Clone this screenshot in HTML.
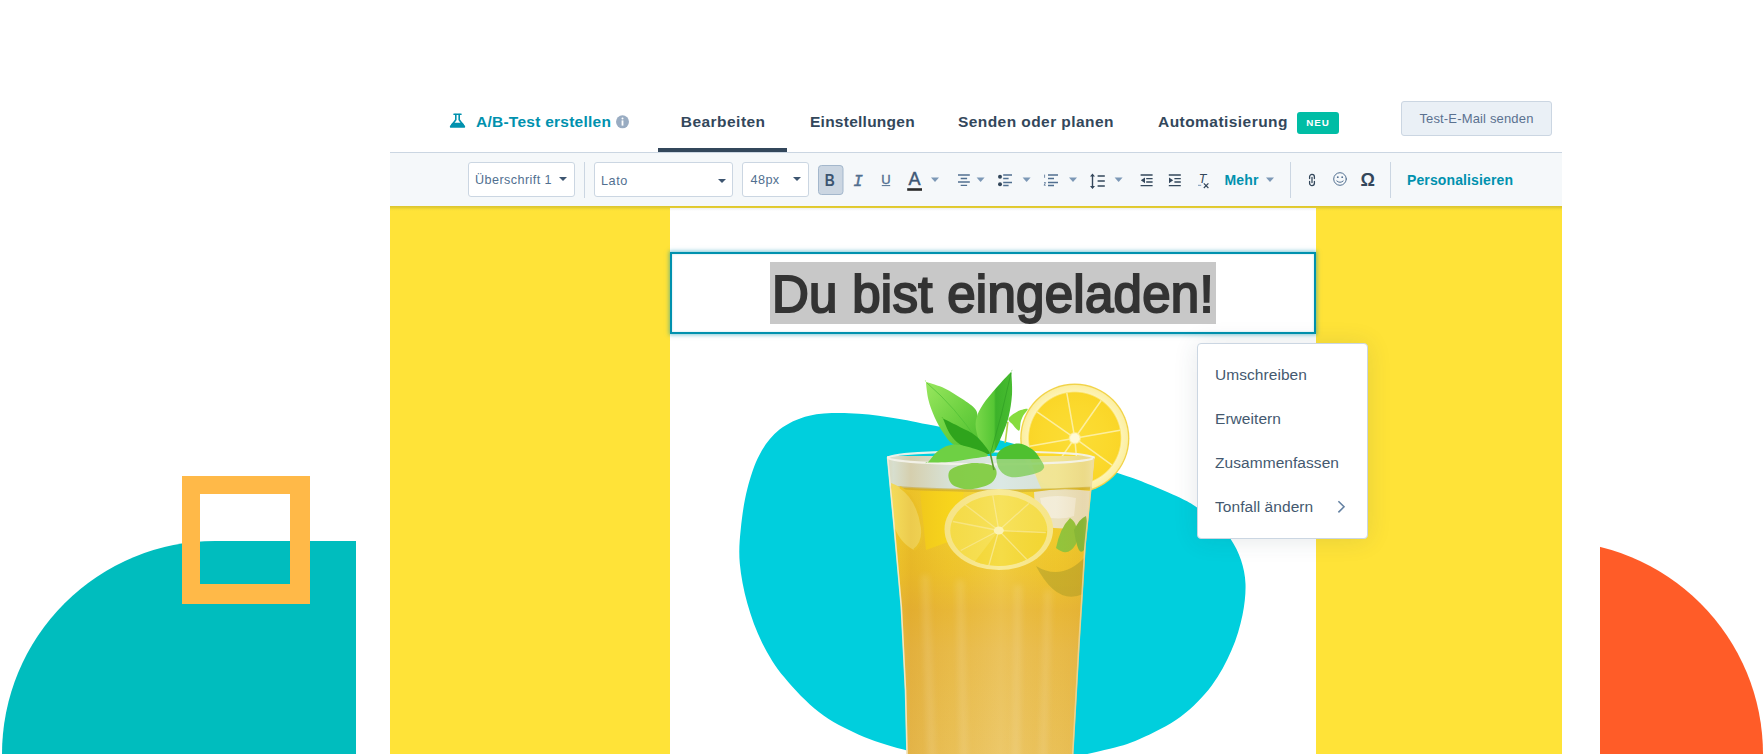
<!DOCTYPE html>
<html lang="de">
<head>
<meta charset="utf-8">
<title>E-Mail bearbeiten</title>
<style>
*{box-sizing:border-box;margin:0;padding:0}
html,body{width:1764px;height:754px;overflow:hidden;background:#fff}
body{position:relative;font-family:"Liberation Sans",sans-serif;color:#33475b}
.abs{position:absolute}
.t{position:absolute;white-space:nowrap;line-height:1}
/* decorative shapes */
#teal{left:2px;top:541px;width:354px;height:213px;background:#00bdbe;border-top-left-radius:213px 213px}
#sq{left:182px;top:476px;width:128px;height:128px;border:18px solid #ffb948;border-right-width:20px;border-bottom-width:20px}
#orange{left:1337px;top:541px;width:426px;height:426px;border-radius:50%;background:#ff5c28}
#card{left:356px;top:33px;width:1244px;height:780px;background:#fff;border-radius:36px}
/* app */
#tabs{left:390px;top:85px;width:1172px;height:67px;background:#fff}
#tbar{left:390px;top:152px;width:1172px;height:54px;background:#f5f8fa;border-top:1px solid #cbd6e2}
#yellow{left:390px;top:206px;width:1172px;height:548px;background:linear-gradient(#dcc52d,#e6cf34 2px,#f6dc37 3px,#ffe338 5px)}
#mail{left:670px;top:208px;width:646px;height:546px;background:linear-gradient(#eef0f2,#fff 3px)}
.tab{font-weight:bold;font-size:15.5px;color:#33475b;letter-spacing:.25px}
.teal{color:#0091ae}
#uline{left:658.2px;top:148px;width:129px;height:4px;background:#33475b}
#neu{left:1297px;top:112px;width:42px;height:22px;border-radius:3px;background:#00bda5}
#btn{left:1400.7px;top:101.3px;width:151px;height:35px;border-radius:3px;background:#eaf0f6;border:1px solid #cbd6e2}
.sel{position:absolute;top:162px;height:35px;background:#fff;border:1px solid #cbd6e2;border-radius:3px}
.sep{position:absolute;top:162px;width:1px;height:36px;background:#cbd6e2}
.caret{position:absolute;width:0;height:0;border-left:4.1px solid transparent;border-right:4.1px solid transparent;border-top:4.7px solid #3d5570}
.caret.l{border-top-color:#7c98b6}
#hbox{left:670px;top:252px;width:646px;height:82px;border:2px solid #0091ae;background:#fff;box-shadow:0 0 4px 1px rgba(0,145,174,.5),inset 0 0 2px rgba(0,145,174,.3)}
#hl{left:770px;top:262px;width:446px;height:62px;background:#c8c8c8}
#h1{left:772px;top:269px;font-size:51px;font-weight:normal;color:#333;-webkit-text-stroke:2px #333;letter-spacing:.28px;transform-origin:0 0;transform:scaleX(1)}
#menu{left:1197px;top:343px;width:171px;height:196px;background:#fff;border:1px solid #cbd6e2;border-radius:4px;box-shadow:0 1px 24px rgba(45,62,80,.12)}
.mi{font-size:15.5px;color:#44596f;left:1215px;letter-spacing:.06px}
</style>
</head>
<body>
<div class="abs" id="teal"></div>
<div class="abs" id="orange"></div>
<div class="abs" id="card"></div>
<div class="abs" id="sq"></div>

<div class="abs" id="tabs"></div>
<div class="abs" id="tbar"></div>
<div class="abs" id="yellow"></div>
<div class="abs" id="mail"></div>

<!-- tabs -->
<span class="t tab teal" id="t1" style="left:476px;top:114px">A/B-Test erstellen</span>
<span class="t tab" id="t2" style="letter-spacing:.46px;left:680.8px;top:113.7px">Bearbeiten</span>
<span class="t tab" id="t3" style="left:810px;top:114px">Einstellungen</span>
<span class="t tab" id="t4" style="letter-spacing:.43px;left:958px;top:114px">Senden oder planen</span>
<span class="t tab" id="t5" style="letter-spacing:.45px;left:1158px;top:114px">Automatisierung</span>
<div class="abs" id="uline"></div>
<div class="abs" id="neu"></div>
<span class="t" id="t6" style="left:1306.2px;top:118.2px;font-size:9.8px;font-weight:bold;color:#fff;letter-spacing:.95px">NEU</span>
<div class="abs" id="btn"></div>
<span class="t" id="t7" style="left:1419.4px;top:111.7px;font-size:13px;letter-spacing:.16px;color:#5a7190">Test-E-Mail senden</span>

<!-- toolbar -->
<div class="sel" style="left:468px;width:107px"></div>
<span class="t" id="t8" style="left:475px;top:174.3px;font-size:12.6px;letter-spacing:.43px;color:#516f90">Überschrift 1</span>
<div class="caret" style="left:559.4px;top:177.3px"></div>
<div class="sep" style="left:584.3px"></div>
<div class="sel" style="left:594px;width:139.2px"></div>
<span class="t" id="t9" style="left:601px;top:175.2px;font-size:12.7px;letter-spacing:.55px;color:#516f90">Lato</span>
<div class="caret" style="left:717.7px;top:178.5px"></div>
<div class="sel" style="left:742.4px;width:66.4px"></div>
<span class="t" id="t10" style="left:750.6px;top:174.1px;font-size:12.7px;letter-spacing:.37px;color:#516f90">48px</span>
<div class="caret" style="left:792.8px;top:177.2px"></div>

<span class="t teal" id="t11" style="left:1224.5px;top:173px;font-size:14px;font-weight:bold;letter-spacing:.2px">Mehr</span>
<div class="sep" style="left:1290px"></div>
<div class="sep" style="left:1390px"></div>
<span class="t teal" id="t12" style="left:1407px;top:173px;font-size:14px;font-weight:bold;letter-spacing:.12px">Personalisieren</span>


<!-- icons overlay -->
<svg class="abs" id="icons" style="left:0;top:0;z-index:5" width="1764" height="754" viewBox="0 0 1764 754" font-family="Liberation Sans, sans-serif">
<!-- flask -->
<g stroke="#0091ae" fill="none" stroke-width="1.6" stroke-linejoin="round" stroke-linecap="round">
<path d="M454 114.3h7"/>
<path d="M455.8 114.6v5.2l-5.1 7h13.6l-5.1-7v-5.2"/>
<path d="M452.6 123.6h9.8l2 3.2h-13.8z" fill="#0091ae"/>
</g>
<!-- info -->
<circle cx="622.5" cy="121.8" r="6.5" fill="#99acc2"/>
<circle cx="622.5" cy="118.4" r="1" fill="#fff"/>
<rect x="621.6" y="120.4" width="1.8" height="5.2" fill="#fff"/>
<!-- bold button -->
<rect x="818.5" y="165.5" width="24.5" height="29" rx="3" fill="#cbd6e2" stroke="#a3b7cc"/>
<text x="0" y="186" font-size="16.5" font-weight="bold" fill="#3b5470" text-anchor="middle" transform="translate(829.8 0) scale(.84 1)">B</text>
<text x="858" y="186" font-size="16" font-style="italic" font-family="Liberation Mono, monospace" fill="#516f90" stroke="#516f90" stroke-width=".5" text-anchor="middle">I</text>
<text x="886" y="183.8" font-size="13" fill="#516f90" stroke="#516f90" stroke-width=".35" text-anchor="middle">U</text>
<rect x="881.8" y="185.1" width="8.4" height="1" fill="#516f90"/>
<text x="914.4" y="184.5" font-size="18" fill="#3f5876" stroke="#3f5876" stroke-width=".45" text-anchor="middle">A</text>
<rect x="907.2" y="188.2" width="14.8" height="2.6" fill="#2b2b2b"/>
<g fill="#7c98b6">
<path d="M931 177.5h8l-4 4.6z"/>
<path d="M976.6 177.5h8l-4 4.6z"/>
<path d="M1022.6 177.5h8l-4 4.6z"/>
<path d="M1069 177.5h8l-4 4.6z"/>
<path d="M1114.6 177.5h8l-4 4.6z"/>
</g>
<!-- align center -->
<g stroke="#516f90" stroke-width="1.3" fill="none">
<path d="M958 175h11.8M960.7 178.5h6.4M958 182h11.8M960.7 185.4h6.4"/>
<!-- bullets -->
<path d="M1003.2 175h8.8M1003.2 178.5h5.4M1003.2 182.5h8.8M1003.2 185.5h5.4"/>
<!-- numbered -->
<path d="M1048 175h10M1048 178.5h6M1048 182.5h10M1048 185.5h6"/>
<path d="M1044.6 174.6v3.2M1044 182.6h1.6l-1.6 2.6h1.8" stroke-width=".8"/>
</g>
<circle cx="1000" cy="176.7" r="2" fill="#33475b"/>
<circle cx="1000" cy="184.2" r="2" fill="#33475b"/>
<!-- line height -->
<g stroke="#33475b" stroke-width="1.6" fill="none">
<path d="M1097.6 176h7.2M1097.6 181h7.2M1097.6 186h7.2"/>
<path d="M1092.5 175v12.4" stroke-width="1.4"/>
</g>
<path d="M1090 176.4l2.5-3 2.5 3zM1090 186l2.5 3 2.5-3z" fill="#33475b"/>
<!-- outdent / indent -->
<g stroke="#33475b" stroke-width="1.4" fill="none">
<path d="M1140.6 175h12M1140.6 185.6h12M1146.2 178.6h6.4M1146.2 182h6.4"/>
<path d="M1168.8 175h12M1168.8 185.6h12M1174.4 178.6h6.4M1174.4 182h6.4"/>
</g>
<path d="M1145 177.4v5.8l-4.2-2.9zM1169 177.4v5.8l4.2-2.9z" fill="#33475b"/>
<!-- clear format -->
<text x="1202.6" y="183.4" font-size="12.5" font-style="italic" fill="#33475b" text-anchor="middle">T</text>
<path d="M1203.8 183.4l4.6 4.6M1208.4 183.4l-4.6 4.6" stroke="#33475b" stroke-width="1.2" fill="none"/>
<rect x="1198" y="184.8" width="3.2" height="1" fill="#7c98b6"/>
<!-- Mehr caret -->
<path d="M1266 177.5h8l-4 4.6z" fill="#7c98b6"/>
<!-- link -->
<g stroke="#33475b" stroke-width="1.3" fill="none" stroke-linecap="round">
<path d="M1309.6 178.6v-1.8a2.4 2.4 0 0 1 4.8 0v1.8M1309.6 181.4v1.8a2.4 2.4 0 0 0 4.8 0v-1.8M1312 177.4v5.2"/>
</g>
<!-- smiley -->
<g stroke="#516f90" stroke-width="1" fill="none" stroke-linecap="round">
<circle cx="1340" cy="179" r="6.3"/>
<path d="M1336.8 181q3.2 2.8 6.4 0"/>
</g>
<circle cx="1337.8" cy="177.2" r=".9" fill="#516f90"/>
<circle cx="1342.2" cy="177.2" r=".9" fill="#516f90"/>
<text x="1367.8" y="186.4" font-size="18" font-weight="bold" fill="#33475b" text-anchor="middle">Ω</text>
<!-- chevron in menu -->
<path d="M1338.4 501.2l5.6 5.6-5.6 5.6" stroke="#6582a3" stroke-width="1.6" fill="none"/>
</svg>

<!-- heading -->
<div class="abs" id="hbox"></div>
<div class="abs" id="hl"></div>
<span class="t" id="h1">Du bist eingeladen!</span>


<!-- picture -->
<svg class="abs" id="pic" style="left:0;top:0" width="1764" height="754" viewBox="0 0 1764 754">
<defs>
<linearGradient id="liq" x1="0" y1="0" x2="0" y2="1">
<stop offset="0" stop-color="#f5d42e"/><stop offset=".3" stop-color="#efc62c"/><stop offset=".45" stop-color="#e9b938"/><stop offset=".6" stop-color="#e9bc4a"/><stop offset="1" stop-color="#eac25a"/>
</linearGradient>
<linearGradient id="shade" x1="0" y1="0" x2="1" y2="0">
<stop offset="0" stop-color="#fff" stop-opacity=".5"/><stop offset=".06" stop-color="#d89a20" stop-opacity=".1"/><stop offset=".14" stop-color="#d08c18" stop-opacity=".26"/><stop offset=".32" stop-color="#d89a20" stop-opacity=".06"/><stop offset=".55" stop-color="#fff" stop-opacity=".1"/><stop offset=".8" stop-color="#d89a20" stop-opacity=".04"/><stop offset=".92" stop-color="#c98a20" stop-opacity=".14"/><stop offset="1" stop-color="#fff" stop-opacity=".35"/>
</linearGradient>
<radialGradient id="lem" cx=".5" cy=".5" r=".5">
<stop offset="0" stop-color="#fff7c8"/><stop offset=".09" stop-color="#fff4b8"/><stop offset=".12" stop-color="#fbdc34"/><stop offset=".6" stop-color="#fbd92c"/><stop offset=".83" stop-color="#fad628"/><stop offset=".86" stop-color="#fdf3b4"/><stop offset=".965" stop-color="#fcefa2"/><stop offset=".985" stop-color="#f1d246"/><stop offset="1" stop-color="#f3d650"/>
</radialGradient>
<filter id="bl" x="-20%" y="-5%" width="140%" height="110%"><feGaussianBlur stdDeviation="3"/></filter>
<clipPath id="gclip"><path d="M887 456L893.3 523L900.8 606.7L905 690L906.7 760H1073L1079.8 640L1082.4 599L1085.6 546L1091 493L1094.4 456Z"/></clipPath>
</defs>
<path fill="#00cfdd" d="M739.8 563.5C738.7 551.1 739.5 541.2 740.8 528.8C742.0 516.4 744.1 501.5 747.3 489.1C750.4 476.7 754.3 464.3 759.7 454.4C765.1 444.5 771.2 436.1 779.5 429.6C787.8 423.2 797.7 418.4 809.3 415.7C820.9 413.0 835.8 412.9 849.0 413.2C862.2 413.4 875.4 415.3 888.6 417.2C901.8 419.1 911.4 421.1 928.3 424.6C945.2 428.1 968.0 432.8 990.0 438.0C1012.0 443.2 1038.7 450.1 1060.0 456.0C1081.3 461.9 1102.8 468.4 1117.6 473.1C1132.4 477.8 1138.3 480.1 1148.6 484.2C1158.9 488.3 1171.5 493.6 1179.6 497.5C1187.7 501.4 1191.1 503.4 1197.0 507.5C1202.9 511.6 1209.4 516.8 1215.0 522.0C1220.6 527.2 1226.3 532.7 1230.6 539.0C1234.9 545.3 1238.5 552.5 1241.0 560.0C1243.5 567.5 1245.2 574.9 1245.5 584.0C1245.8 593.1 1244.8 603.9 1242.5 614.9C1240.2 625.9 1236.7 638.5 1231.5 650.3C1226.3 662.1 1220.1 674.6 1211.6 685.7C1203.1 696.8 1192.6 707.8 1180.6 716.7C1168.6 725.6 1152.4 733.4 1139.7 738.9C1127.0 744.4 1120.9 746.1 1104.3 750.0C1087.7 753.9 1064.0 760.0 1040.0 762.0C1016.0 764.0 982.8 764.1 960.0 762.0C937.2 759.9 920.4 754.0 903.5 749.5C886.6 745.0 872.9 740.9 858.9 734.7C844.9 728.5 831.6 721.8 819.2 712.3C806.8 702.8 794.0 689.2 784.5 677.6C775.0 666.0 768.4 655.3 762.2 642.9C756.0 630.5 751.0 616.4 747.3 603.2C743.6 590.0 740.9 575.9 739.8 563.5Z"/>
<!-- lemon slice on rim -->
<circle cx="1074.8" cy="438.2" r="54.6" fill="url(#lem)"/>
<g stroke="#fdf0a4" stroke-width="1.5" opacity=".95">
<path d="M1074.8 438.2L1066.8 392.9M1074.8 438.2L1101.2 400.5M1074.8 438.2L1120.1 430.2M1074.8 438.2L1112.0 465.2M1074.8 438.2L1078.8 484.0M1074.8 438.2L1048.4 475.9M1074.8 438.2L1029.5 446.2M1074.8 438.2L1037.1 411.8"/>
</g>
<circle cx="1074.8" cy="438.2" r="4.6" fill="#fffad8"/>
<!-- back leaf -->
<path d="M1007.8 422L1005.2 443" stroke="#b4d246" stroke-width="1.6" fill="none"/>
<path d="M1008.6 418.6C1009.5 416.6 1014.0 413.3 1017.2 411.7C1020.4 410.1 1026.6 408.3 1027.6 409.0C1028.6 409.7 1024.2 413.8 1023.0 416.0C1021.9 418.2 1021.4 419.6 1020.7 422.0C1020.0 424.4 1020.5 430.4 1019.0 430.7C1017.5 431.0 1013.7 425.8 1012.0 423.8C1010.3 421.8 1007.7 420.6 1008.6 418.6Z" fill="#86dc3e"/>
<!-- glass -->
<g clip-path="url(#gclip)">
<rect x="880" y="450" width="220" height="40" fill="#e7e7e2" opacity=".93"/>
<path d="M1030 456h70v34h-58q-8-16-12-34z" fill="#f3e88e" opacity=".85"/>
<path d="M880 487q110 6 220 0V760H880z" fill="url(#liq)"/>
<path d="M888 487q104 7 206 1" stroke="#c4a526" stroke-width="3" fill="none" opacity=".55"/>
<!-- ice -->
<path d="M1034 492q28-5 56-1l-2 32q-22 10-46 2q-8-14-8-33z" fill="#ebe6cf" opacity=".95"/>
<path d="M1040 498q18-4 36 0l-2 18q-16 5-30 0z" fill="#f6f3e6" opacity=".8"/>
<!-- wedge behind -->
<path d="M920 491l44 1q-6 30-16 50l-22 8z" fill="#f9d81c"/>
<!-- left slice -->
<path d="M891 483q24 8 31 44q2 16-8 23q-16-8-21-28z" fill="#f6e160"/>
<path d="M900 487q18 12 22 40q2 16-8 23" stroke="#f2cf2c" stroke-width="2.4" fill="none"/>
<!-- right mint -->
<path d="M1056 548q4-20 14-30q10 6 6 26q-8 14-20 4z" fill="#8fc63d"/>
<path d="M1074 530q6-12 12-14q4 14-2 34q-6 8-10-20z" fill="#7fbc3a"/>
<path d="M1036 566q26 16 50-10l-3 38q-26 12-47-28z" fill="#b9a52a" opacity=".7"/>
<!-- front slice -->
<ellipse cx="998.8" cy="529.5" rx="54.3" ry="40.5" fill="#f8e98e"/>
<ellipse cx="998.8" cy="530.5" rx="48.5" ry="35.5" fill="#f6df4a"/>
<path d="M998.8 530.5L1047 531A48.5 35.5 0 0 1 975 561.5z" fill="#f4d62c" opacity=".8"/>
<g stroke="#f9ea90" stroke-width="1.3" opacity=".8"><path d="M998.8 530.5l-6-35M998.8 530.5l30-27M998.8 530.5l47 2M998.8 530.5l28 29M998.8 530.5l-10 35M998.8 530.5l-38 20M998.8 530.5l-46-9M998.8 530.5l-34-26"/></g>
<ellipse cx="998.8" cy="530.5" rx="5" ry="4" fill="#fbf2b0"/>
<rect x="880" y="450" width="220" height="320" fill="url(#shade)"/>
<g stroke="#fff" opacity=".13" stroke-width="7" filter="url(#bl)"><path d="M925 575L932 760M960 580L964 760M1018 585L1016 760M1048 590L1043 760"/></g>
</g>
<!-- rim -->
<ellipse cx="990.8" cy="457.8" rx="103" ry="6.5" fill="none" stroke="#f3f2ea" stroke-width="2.2" opacity=".95"/>
<path d="M887.6 458L893.8 523L901.3 606.7L905.5 690L907.2 760" stroke="#f5efd8" stroke-width="1.6" opacity=".85" fill="none"/>
<path d="M1093.8 458L1090.4 493L1085 546L1081.8 599L1079.2 640L1072.4 760" stroke="#ecd9a0" stroke-width="1.6" opacity=".8" fill="none"/>
<!-- leaf in glass -->
<path d="M950.0 470.3C952.9 466.9 962.1 464.2 969.0 463.4C975.9 462.5 986.8 463.5 991.4 465.2C996.0 466.9 996.9 470.7 996.6 473.8C996.3 476.9 994.3 481.4 989.7 484.0C985.1 486.6 975.3 489.3 969.0 489.3C962.7 489.3 954.9 487.2 951.7 484.0C948.5 480.8 947.1 473.7 950.0 470.3Z" fill="#7ccb3a" opacity=".9"/>
<!-- leaves -->
<defs>
<linearGradient id="g1" x1="0" y1="0" x2="1" y2="1"><stop offset="0" stop-color="#9be860"/><stop offset=".55" stop-color="#6fd242"/><stop offset="1" stop-color="#4fc030"/></linearGradient>
<linearGradient id="g2" x1="0" y1="0" x2="1" y2="0"><stop offset="0" stop-color="#7ad84a"/><stop offset=".5" stop-color="#55c634"/><stop offset=".55" stop-color="#3cb22a"/><stop offset="1" stop-color="#48bc30"/></linearGradient>
<clipPath id="above"><rect x="900" y="360" width="200" height="99.5"/></clipPath>
<clipPath id="below"><rect x="900" y="459.5" width="200" height="40"/></clipPath>
</defs>
<path d="M925.9 381.6C925.6 378.7 923.4 380.9 926.5 382.0C929.6 383.1 938.9 385.6 944.8 388.4C950.7 391.2 956.8 395.2 962.0 398.8C967.2 402.4 973.3 405.8 975.9 410.0C978.5 414.2 977.1 418.8 977.5 424.0C977.9 429.2 979.9 437.3 978.0 441.0C976.1 444.7 970.1 445.4 966.0 446.0C961.9 446.6 957.2 446.8 953.4 444.5C949.6 442.2 946.1 437.0 943.0 432.4C939.9 427.8 936.9 422.3 934.5 416.9C932.1 411.4 929.8 405.6 928.4 399.7C927.0 393.8 926.2 384.6 925.9 381.6Z" fill="url(#g1)"/>
<path d="M927 383Q956 408 977 440" stroke="#4fbf34" stroke-width="1" fill="none" opacity=".7"/>
<path d="M1011.2 371.7C1013.7 369.2 1011.3 368.6 1011.4 372.4C1011.5 376.2 1012.5 387.1 1012.0 394.5C1011.5 401.9 1010.3 410.0 1008.6 416.9C1006.9 423.8 1004.3 429.9 1001.7 435.9C999.1 441.9 995.8 450.8 993.0 453.0C990.2 455.2 987.6 451.9 985.0 449.0C982.4 446.1 979.1 440.7 977.6 435.9C976.1 431.1 975.0 425.5 975.9 420.3C976.8 415.1 979.3 410.2 982.8 404.8C986.2 399.4 991.9 393.1 996.6 387.6C1001.3 382.1 1008.7 374.2 1011.2 371.7Z" fill="url(#g2)"/>
<path d="M1011 373Q1002 415 991 452" stroke="#2f9e24" stroke-width="1" fill="none" opacity=".7"/>
<path d="M943.0 418.6C941.9 416.1 940.7 417.4 943.6 418.8C946.5 420.2 954.9 424.4 960.3 427.2C965.7 430.0 971.0 431.6 975.9 435.9C980.8 440.2 989.4 450.4 989.7 453.0C990.0 455.6 982.5 452.8 977.6 451.4C972.7 450.0 964.9 447.4 960.3 444.5C955.7 441.6 952.9 438.3 950.0 434.0C947.1 429.7 944.1 421.1 943.0 418.6Z" fill="#2fa41c"/>
<path d="M927.6 462.6C923.7 462.7 926.2 464.1 928.2 462.0C930.2 459.9 935.2 452.6 939.7 449.7C944.2 446.8 948.9 444.5 955.2 444.5C961.5 444.5 972.1 447.9 977.6 449.7C983.1 451.5 988.6 454.1 988.0 455.5C987.4 456.9 980.0 457.3 974.0 458.3C968.0 459.3 959.4 461.0 951.7 461.7C944.0 462.4 931.5 462.6 927.6 462.6Z" fill="#6ed044"/>
<path d="M996.6 456.6C997.2 452.9 999.7 450.2 1003.4 448.0C1007.1 445.8 1014.1 443.3 1019.0 443.6C1023.9 443.9 1029.3 447.2 1032.8 449.7C1036.2 452.1 1037.8 455.3 1039.7 458.3C1041.6 461.3 1044.9 465.2 1044.0 467.8C1043.1 470.4 1039.8 472.2 1034.5 473.8C1029.2 475.4 1017.8 477.8 1012.0 477.2C1006.2 476.6 1002.6 473.7 1000.0 470.3C997.4 466.9 996.0 460.3 996.6 456.6Z" fill="#4fc030" clip-path="url(#above)"/>
<path d="M996.6 456.6C997.2 452.9 999.7 450.2 1003.4 448.0C1007.1 445.8 1014.1 443.3 1019.0 443.6C1023.9 443.9 1029.3 447.2 1032.8 449.7C1036.2 452.1 1037.8 455.3 1039.7 458.3C1041.6 461.3 1044.9 465.2 1044.0 467.8C1043.1 470.4 1039.8 472.2 1034.5 473.8C1029.2 475.4 1017.8 477.8 1012.0 477.2C1006.2 476.6 1002.6 473.7 1000.0 470.3C997.4 466.9 996.0 460.3 996.6 456.6Z" fill="#86cf62" opacity=".85" clip-path="url(#below)"/>
<path d="M990 452L994 470" stroke="#5a9a30" stroke-width="1.6" fill="none"/>
</svg>

<!-- menu -->
<div class="abs" id="menu"></div>
<span class="t mi" id="m1" style="top:366.8px">Umschreiben</span>
<span class="t mi" id="m2" style="top:410.8px">Erweitern</span>
<span class="t mi" id="m3" style="top:454.8px">Zusammenfassen</span>
<span class="t mi" id="m4" style="top:498.8px">Tonfall ändern</span>
</body>
</html>
